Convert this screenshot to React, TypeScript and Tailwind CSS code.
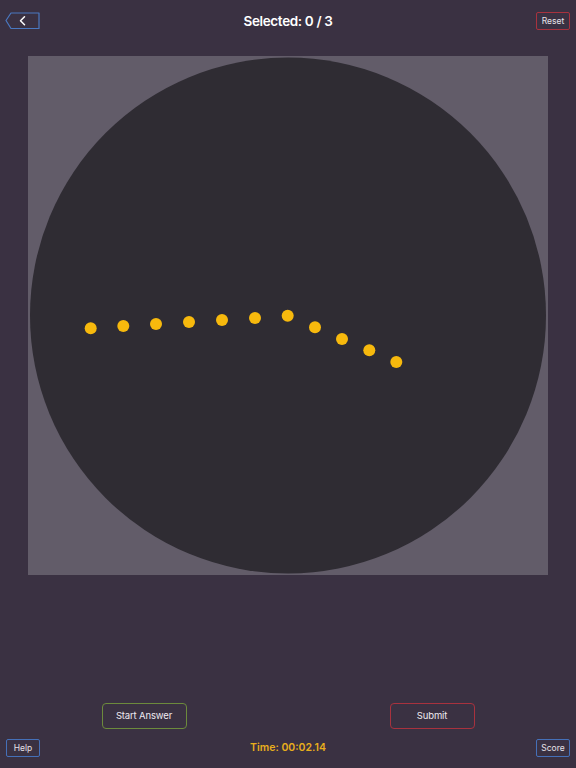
import React from "react";

const dots: [number, number][] = [
  [62.7, 272.3],
  [95.3, 270],
  [128, 268],
  [161, 266],
  [194, 264],
  [227, 262],
  [259.7, 259.7],
  [287, 271.3],
  [314, 283],
  [341.3, 294.3],
  [368.3, 306],
];

export default function App() {
  return (
    <div
      className="w-[576px] h-[768px] bg-[#3a3142] flex flex-col text-white overflow-hidden"
      style={{ fontFamily: "Inter, 'Noto Sans', sans-serif" }}
    >
      {/* Top bar */}
      <div className="relative h-[42px] flex items-center justify-between pl-[5px] pr-[6px]">
        <button className="w-[36px] h-[18px] block">
          <svg width="36" height="18" viewBox="0 0 36 18">
            <path
              d="M1 8.5 L6 1 L34 1 L34 16.5 L6 16.5 Z"
              fill="none"
              stroke="#4a78c0"
              strokeWidth="1.2"
              strokeLinejoin="round"
            />
            <path
              d="M19.5 4.8 L15.5 8.8 L19.5 12.8"
              fill="none"
              stroke="#ffffff"
              strokeWidth="1.5"
              strokeLinecap="round"
              strokeLinejoin="round"
            />
          </svg>
        </button>
        <div className="absolute left-0 right-0 top-0 h-[42px] flex items-center justify-center pointer-events-none">
          <span className="text-[13.5px] font-semibold text-white tracking-[-0.35px]">
            Selected: 0 / 3
          </span>
        </div>
        <button className="w-[34px] h-[18px] border border-[#a8323e] rounded-[2px] flex items-center justify-center text-[8.5px] text-[#e6e2e8] leading-none">
          Reset
        </button>
      </div>

      {/* Canvas */}
      <div className="mx-[28px] mt-[14px] h-[519px] bg-[#625c69]">
        <svg width="520" height="519" viewBox="0 0 520 519" className="block">
          <circle cx="260" cy="259.5" r="258" fill="#2f2c33" />
          {dots.map(([x, y], i) => (
            <circle key={i} cx={x} cy={y} r="6" fill="#f7b90d" />
          ))}
        </svg>
      </div>

      <div className="flex-1" />

      {/* Action buttons */}
      <div className="grid grid-cols-2">
        <div className="flex justify-center">
          <button className="w-[85px] h-[26px] border border-[#6c8a3c] rounded-[4px] text-[9.5px] tracking-[-0.15px] text-[#eeeaf0] flex items-center justify-center">
            Start Answer
          </button>
        </div>
        <div className="flex justify-center">
          <button className="w-[85px] h-[26px] border border-[#a8323e] rounded-[4px] text-[9.5px] tracking-[-0.15px] text-[#eeeaf0] flex items-center justify-center">
            Submit
          </button>
        </div>
      </div>

      {/* Bottom row */}
      <div className="relative mt-[10px] mb-[11px] h-[18px] flex items-center justify-between pl-[6px] pr-[6px]">
        <button className="w-[34px] h-[18px] border border-[#4570b8] rounded-[2px] text-[8.5px] text-[#e6e2e8] flex items-center justify-center leading-none">
          Help
        </button>
        <div className="absolute inset-0 flex items-center justify-center pointer-events-none">
          <span className="text-[10.5px] font-semibold text-[#e8ae1c]">Time: 00:02.14</span>
        </div>
        <button className="w-[34px] h-[18px] border border-[#4570b8] rounded-[2px] text-[8.5px] text-[#e6e2e8] flex items-center justify-center leading-none">
          Score
        </button>
      </div>
    </div>
  );
}
